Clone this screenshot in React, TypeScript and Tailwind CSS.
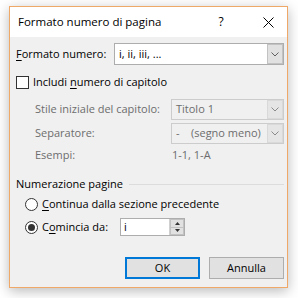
import React from "react";

const Chevron = ({ color = "#606060" }: { color?: string }) => (
  <svg width="8" height="5" viewBox="0 0 8 5">
    <path d="M0.5 0.5 L4 4 L7.5 0.5" fill="none" stroke={color} strokeWidth="1" />
  </svg>
);

const Combo = ({
  width,
  text,
  disabled,
}: {
  width: string;
  text: React.ReactNode;
  disabled?: boolean;
}) => (
  <div
    className={`flex h-full ${width} border ${
      disabled ? "border-[#cccccc] bg-[#f0f0f0] text-[#6d6d6d]" : "border-[#adadad] bg-white text-black"
    }`}
  >
    <div className="flex flex-1 items-center pl-[4px] whitespace-pre">{text}</div>
    <div
      className={`flex w-[16px] items-center justify-center border ${
        disabled ? "border-[#d9d9d9] bg-[#e5e5e5]" : "border-[#c2c2c2] bg-[#e1e1e1]"
      }`}
    >
      <Chevron color={disabled ? "#8a8a8a" : "#606060"} />
    </div>
  </div>
);

const Radio = ({ checked }: { checked?: boolean }) => (
  <div className="flex h-[13px] w-[13px] items-center justify-center rounded-full border border-[#333333] bg-white">
    {checked && <div className="h-[7px] w-[7px] rounded-full bg-[#333333]" />}
  </div>
);

export default function App() {
  return (
    <div
      className="h-[298px] w-[298px] bg-white pl-[9px] pt-[6px] text-[11px] text-black"
      style={{ fontFamily: '"Open Sans", "Noto Sans", sans-serif' }}
    >
      <div className="flex h-[282px] w-[279px] flex-col border border-[#f0a868] bg-[#f0f0f0] shadow-[0_3px_12px_rgba(0,0,0,0.28)]">
        {/* Title bar */}
        <div className="flex h-[30px] items-center bg-white pl-[8px] text-[11.5px]">
          <div className="flex-1">Formato numero di pagina</div>
          <div className="w-[14px] text-center text-[12px]">?</div>
          <div className="w-[21px]" />
          <div className="flex w-[38px] items-center justify-center">
            <svg width="11" height="11" viewBox="0 0 11 11">
              <path d="M0.5 0.5 L10.5 10.5 M10.5 0.5 L0.5 10.5" stroke="#000" strokeWidth="1" />
            </svg>
          </div>
        </div>

        <div className="flex flex-1 flex-col pl-[6px] pr-[3px]">
          {/* Formato numero */}
          <div className="mt-[6px] flex h-[22px] items-center">
            <div className="w-[98px]">
              <span className="underline underline-offset-2">F</span>ormato numero:
            </div>
            <Combo width="w-[170px]" text="i, ii, iii, ..." />
          </div>

          {/* Includi */}
          <div className="flex h-[34px] items-center gap-[4px]">
            <div className="h-[13px] w-[13px] border border-[#333333] bg-white" />
            <div>
              Includi <span className="underline underline-offset-2">n</span>umero di capitolo
            </div>
          </div>

          {/* Stile */}
          <div className="flex h-[21px] items-center pl-[19px] text-[#6d6d6d]">
            <div className="w-[136px]">Stile iniziale del capitolo:</div>
            <Combo width="w-[113px]" text="Titolo 1" disabled />
          </div>

          {/* Separatore */}
          <div className="mt-[3px] flex h-[21px] items-center pl-[19px] text-[#6d6d6d]">
            <div className="w-[136px]">Separatore:</div>
            <Combo width="w-[113px]" text={"-    (segno meno)"} disabled />
          </div>

          {/* Esempi */}
          <div className="flex h-[22px] items-center pl-[19px] text-[#6d6d6d]">
            <div className="w-[137px]">Esempi:</div>
            <div>1-1, 1-A</div>
          </div>

          {/* Numerazione pagine */}
          <div className="mt-[6px] flex h-[24px] items-center gap-[6px]">
            <div>Numerazione pagine</div>
            <div className="h-px flex-1 bg-[#dcdcdc]" />
          </div>

          {/* Continua */}
          <div className="flex h-[16px] items-center gap-[4px] pl-[9px]">
            <Radio />
            <div>
              <span className="underline underline-offset-2">C</span>ontinua dalla sezione precedente
            </div>
          </div>

          {/* Comincia */}
          <div className="mt-[6px] flex h-[18px] items-center pl-[9px]">
            <Radio checked />
            <div className="ml-[4px] w-[78px]">
              C<span className="underline underline-offset-2">o</span>mincia da:
            </div>
            <div className="flex h-full w-[65px] border border-[#adadad] bg-white">
              <div className="flex flex-1 items-center pl-[3px]">i</div>
              <div className="flex w-[15px] flex-col border-l border-[#d0d0d0]">
                <div className="flex flex-1 items-center justify-center border border-[#c2c2c2] bg-[#e1e1e1]">
                  <svg width="5" height="3" viewBox="0 0 5 3">
                    <path d="M0 3 L2.5 0 L5 3 Z" fill="#333" />
                  </svg>
                </div>
                <div className="flex flex-1 items-center justify-center border border-t-0 border-[#c2c2c2] bg-[#e1e1e1]">
                  <svg width="5" height="3" viewBox="0 0 5 3">
                    <path d="M0 0 L2.5 3 L5 0 Z" fill="#333" />
                  </svg>
                </div>
              </div>
            </div>
          </div>

          {/* Buttons */}
          <div className="mt-[21px] flex h-[22px] justify-end gap-[9px]">
            <div className="flex w-[75px] items-center justify-center border-2 border-[#0078d7] bg-[#e1e1e1]">
              OK
            </div>
            <div className="flex w-[75px] items-center justify-center border border-[#adadad] bg-[#e1e1e1]">
              Annulla
            </div>
          </div>
        </div>
      </div>
    </div>
  );
}
